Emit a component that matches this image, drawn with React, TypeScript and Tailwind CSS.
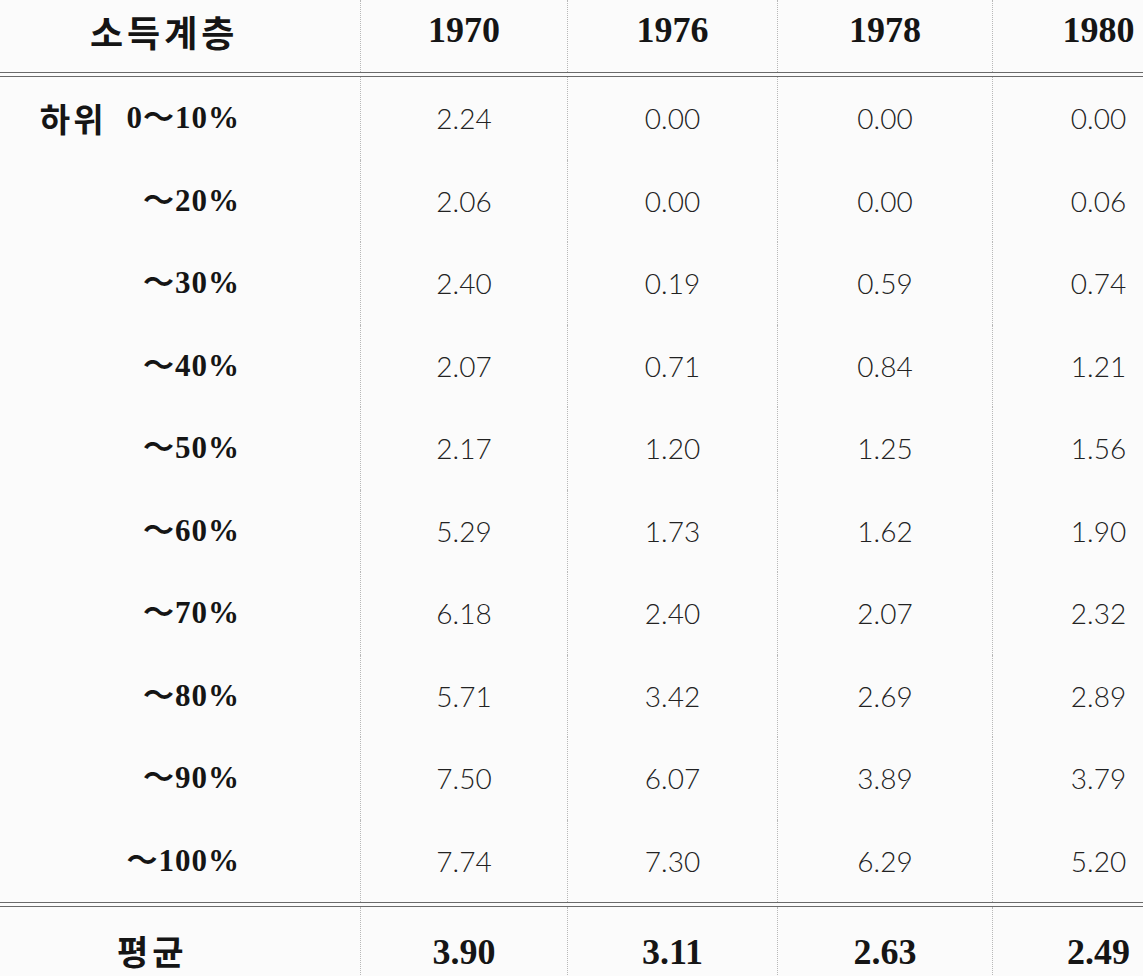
const years = ["1970", "1976", "1978", "1980"];

const rows: { label: string; prefix?: string; values: string[] }[] = [
  { prefix: "하위", label: "0～10%", values: ["2.24", "0.00", "0.00", "0.00"] },
  { label: "～20%", values: ["2.06", "0.00", "0.00", "0.06"] },
  { label: "～30%", values: ["2.40", "0.19", "0.59", "0.74"] },
  { label: "～40%", values: ["2.07", "0.71", "0.84", "1.21"] },
  { label: "～50%", values: ["2.17", "1.20", "1.25", "1.56"] },
  { label: "～60%", values: ["5.29", "1.73", "1.62", "1.90"] },
  { label: "～70%", values: ["6.18", "2.40", "2.07", "2.32"] },
  { label: "～80%", values: ["5.71", "3.42", "2.69", "2.89"] },
  { label: "～90%", values: ["7.50", "6.07", "3.89", "3.79"] },
  { label: "～100%", values: ["7.74", "7.30", "6.29", "5.20"] },
];

const averages = ["3.90", "3.11", "2.63", "2.49"];

const serif = "font-['Liberation_Serif','Noto_Sans_CJK_KR',serif]";
const korean = "font-['Noto_Sans_CJK_KR',sans-serif]";
const thin = "font-['Lato','Open_Sans',sans-serif]";

function DoubleRule() {
  return <div className="col-span-5 h-[5px] border-y border-[#6a6a6a]" />;
}

export default function App() {
  return (
    <div className="h-[976px] w-[1143px] overflow-hidden bg-[#fbfbfb] text-[#151515]">
      <div className="grid w-[1204px] grid-cols-[360px_207px_210px_215px_212px]">
        {/* header */}
        <div className="flex h-[72px] items-center pb-[10px] pl-[90px]">
          <span className={`${korean} text-[36px] font-bold tracking-[4px]`}>소득계층</span>
        </div>
        {years.map((y) => (
          <div
            key={y}
            className="flex h-[72px] items-center justify-center border-l border-dotted border-[#b8b8b8] pb-[12px]"
          >
            <span className={`${serif} text-[36px] font-bold`}>{y}</span>
          </div>
        ))}

        <DoubleRule />

        {rows.map((r) => (
          <div key={r.label} className="contents">
            <div className="flex h-[82.5px] items-center justify-end pr-[120px]">
              {r.prefix && (
                <span className={`${korean} mr-[20px] text-[33px] font-bold tracking-[3px]`}>
                  {r.prefix}
                </span>
              )}
              <span className={`${serif} text-[31px] font-bold tracking-[1px]`}>{r.label}</span>
            </div>
            {r.values.map((v, i) => (
              <div
                key={i}
                className="flex h-[82.5px] items-center justify-center border-l border-dotted border-[#b8b8b8]"
              >
                <span className={`${thin} text-[28px] font-light text-[#222]`}>{v}</span>
              </div>
            ))}
          </div>
        ))}

        <DoubleRule />

        {/* average */}
        <div className="flex h-[70px] items-start pl-[117px] pt-[18px]">
          <span className={`${korean} text-[34px] font-bold tracking-[4px]`}>평균</span>
        </div>
        {averages.map((a) => (
          <div
            key={a}
            className="flex h-[70px] items-start justify-center border-l border-dotted border-[#b8b8b8] pt-[18px]"
          >
            <span className={`${serif} text-[36px] font-bold`}>{a}</span>
          </div>
        ))}
      </div>
    </div>
  );
}
